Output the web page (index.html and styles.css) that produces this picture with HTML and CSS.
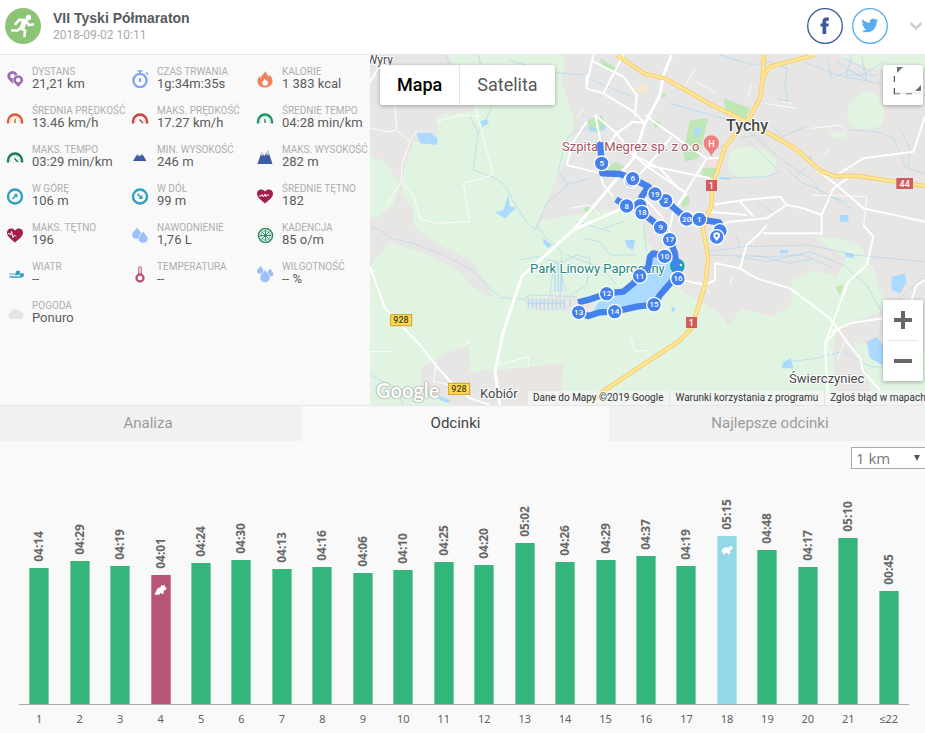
FILE: index.html
```html
<!DOCTYPE html>
<html lang="pl">

<head>
    <meta charset="UTF-8">
    <meta name="viewport" content="width=device-width, initial-scale=1.0">
    <title>VII Tyski Półmaraton</title>
    <link rel="stylesheet" href="styles.css">
</head>

<body>

    <header class="header">
        <svg class="avatar" viewBox="0 0 36 36">
            <circle cx="18" cy="18" r="18" fill="#8bc474"/>
            <circle cx="23.500" cy="9.500" r="2.700" fill="#fff"/>
            <path d="M20.500 12l-6-.3-4 4.300M20 12.500l-4.500 7.500 4.500 2.500-.5 5.500M15.500 20l-3 2.500H7M21.500 13l2 4 4.500-.5" fill="none" stroke="#fff" stroke-width="2.600" stroke-linecap="round" stroke-linejoin="round"/>
            <path d="M17 12l5 1-2.500 7.500-4.500-1z" fill="#fff"/>
        </svg>
        <div class="heading">
            <h1>VII Tyski Półmaraton</h1>
            <time datetime="2018-09-02T10:11">2018-09-02 10:11</time>
        </div>
        <a class="share" href="#" aria-label="Facebook">
            <svg viewBox="0 0 36 36">
                <circle cx="18" cy="18" r="17.300" fill="none" stroke="#3b5998" stroke-width="1.300"/>
                <path d="M15.500 26v-7.500h-2v-3h2v-2c0-2.700 1.300-4 3.800-4h2.500v3.200h-1.500c-.9 0-1.100.4-1.100 1v1.800h2.600l-.4 3h-2.200V26z" fill="#3b5998"/>
            </svg>
        </a>
        <a class="share" href="#" aria-label="Twitter">
            <svg viewBox="0 0 36 36">
                <circle cx="18" cy="18" r="17.300" fill="none" stroke="#55acee" stroke-width="1.300"/>
                <path transform="translate(9.500 9) scale(.7)" d="M23.950 4.570a10 10 0 0 1-2.820.77 4.960 4.960 0 0 0 2.160-2.720c-.95.55-2 .95-3.130 1.180a4.920 4.920 0 0 0-8.380 4.480C7.690 8.100 4.070 6.130 1.640 3.160a4.920 4.920 0 0 0 1.520 6.570 4.900 4.900 0 0 1-2.230-.61v.06c0 2.390 1.710 4.380 3.950 4.830a5 5 0 0 1-2.210.08 4.940 4.940 0 0 0 4.600 3.420A9.870 9.870 0 0 1 0 19.540a13.990 13.990 0 0 0 7.550 2.210c9.060 0 14.010-7.500 14.010-13.980l-.02-.64a9.940 9.940 0 0 0 2.410-2.560z" fill="#55acee"/>
            </svg>
        </a>
        <button class="more" type="button" aria-label="Więcej">
            <svg viewBox="0 0 14 10"><path d="M1.500 2L7 7.500 12.500 2" fill="none" stroke="#ccc" stroke-width="2.500"/></svg>
        </button>
    </header>

    <main>
        <section class="overview">
            <dl class="stats">
                <div class="stat">
                    <svg viewBox="0 0 18 18">
                        <path d="M6.500 1A5.200 5.200 0 0 0 1.300 6.200c0 3 3.200 4.300 5.200 7.300 2-3 5.200-4.300 5.200-7.300A5.200 5.200 0 0 0 6.500 1z" fill="#9c6bb0"/>
                        <circle cx="6.500" cy="6" r="2.300" fill="#f9f9f9"/>
                        <path d="M12.200 5a5.200 5.200 0 0 0-5.200 5.200c0 3 3.200 4 5.200 7.300 2-3.300 5.200-4.300 5.200-7.300A5.200 5.200 0 0 0 12.200 5z" fill="#9c6bb0" stroke="#f9f9f9" stroke-width=".7"/>
                        <circle cx="12.200" cy="10" r="2.300" fill="#f9f9f9"/>
                    </svg>
                    <div><dt>DYSTANS</dt><dd>21,21 km</dd></div>
                </div>
                <div class="stat">
                    <svg viewBox="0 0 18 18" fill="none" stroke="#7fa9ee">
                        <circle cx="9" cy="10.500" r="6.600" stroke-width="2.400"/>
                        <path d="M9 1.500V4M6.500 1h5M15 2.500l2 2" stroke-width="1.700"/>
                        <path d="M9 8v4" stroke-width="2"/>
                    </svg>
                    <div><dt>CZAS TRWANIA</dt><dd>1g:34m:35s</dd></div>
                </div>
                <div class="stat">
                    <svg viewBox="0 0 18 18">
                        <path d="M9.500 1c.5 3 2.500 3.500 3 6 .8-.5 1-1.500.8-2.500 2 2 3.200 4 3.200 6.500 0 4-3.300 6.500-7.500 6.500S1.500 15 1.500 11.200c0-2.500 1.300-4 2.300-5.500 0 1.200.3 2 1.200 2.500C5.500 4.500 8.500 4 9.500 1z" fill="#ef825f"/>
                        <circle cx="9.200" cy="13" r="2.800" fill="#f9f9f9"/>
                        <path d="M8.500 8.500l3 4H7z" fill="#f9f9f9"/>
                    </svg>
                    <div><dt>KALORIE</dt><dd>1 383 kcal</dd></div>
                </div>

                <div class="stat">
                    <svg viewBox="0 0 18 18" fill="none" stroke="#dc5c3b">
                        <path d="M2 14.500v-2a7 7 0 0 1 14 0v2" stroke-width="2.400"/>
                        <path d="M4.500 13.500v-1a4.500 4.500 0 0 1 9 0v1" stroke-dasharray="1 1.200" stroke="#eda390"/>
                        <path d="M9 10v4" stroke-width="1.500"/>
                    </svg>
                    <div><dt>ŚREDNIA PRĘDKOŚĆ</dt><dd>13.46 km/h</dd></div>
                </div>
                <div class="stat">
                    <svg viewBox="0 0 18 18" fill="none" stroke="#c94236">
                        <path d="M2 14.500v-2a7 7 0 0 1 14 0v2" stroke-width="2.400"/>
                        <path d="M4.500 13.500v-1a4.500 4.500 0 0 1 9 0v1" stroke-dasharray="1 1.200" stroke="#dfa29c"/>
                        <path d="M8.500 10.500l3.500 3.500" stroke-width="1.500"/>
                    </svg>
                    <div><dt>MAKS. PRĘDKOŚĆ</dt><dd>17.27 km/h</dd></div>
                </div>
                <div class="stat">
                    <svg viewBox="0 0 18 18" fill="none" stroke="#209463">
                        <path d="M2 14.500v-2a7 7 0 0 1 14 0v2" stroke-width="2.400"/>
                        <path d="M4.500 13.500v-1a4.500 4.500 0 0 1 9 0v1" stroke-dasharray="1 1.200" stroke="#8fc9ae"/>
                        <path d="M9 10v4" stroke-width="1.500"/>
                    </svg>
                    <div><dt>ŚREDNIE TEMPO</dt><dd>04:28 min/km</dd></div>
                </div>

                <div class="stat">
                    <svg viewBox="0 0 18 18" fill="none" stroke="#1d7a5c">
                        <path d="M2 14.500v-2a7 7 0 0 1 14 0v2" stroke-width="2.400"/>
                        <path d="M4.500 13.500v-1a4.500 4.500 0 0 1 9 0v1" stroke-dasharray="1 1.200" stroke="#8dbcad"/>
                        <path d="M8.500 10.500l3.500 3.500" stroke-width="1.500"/>
                    </svg>
                    <div><dt>MAKS. TEMPO</dt><dd>03:29 min/km</dd></div>
                </div>
                <div class="stat">
                    <svg viewBox="0 0 18 18">
                        <path d="M2 13l4.500-7.500 2 3 2.500-3L15.500 13z" fill="#3f5ba5"/>
                        <path d="M5.200 7.700l1.300-2.400L8 7.700l-1.500-.5zM9.500 7.500L11 5.300l1.300 2.200-1.300-.5z" fill="#dfe5f3"/>
                    </svg>
                    <div><dt>MIN. WYSOKOŚĆ</dt><dd>246 m</dd></div>
                </div>
                <div class="stat">
                    <svg viewBox="0 0 18 18">
                        <path d="M1.500 16L5.500 4l3 4 3.500-5.500L16.500 16z" fill="#3f5ba5"/>
                        <path d="M4.500 7l1.200-3.500L7.500 7l-1.300 1zM10 6l2-4 1.500 4-2 1.500z" fill="#c4cde5"/>
                    </svg>
                    <div><dt>MAKS. WYSOKOŚĆ</dt><dd>282 m</dd></div>
                </div>

                <div class="stat">
                    <svg viewBox="0 0 18 18" fill="none" stroke="#2fa0be">
                        <circle cx="9" cy="9.500" r="7" stroke-width="2.400"/>
                        <path d="M6.500 12l4-4" stroke-width="1.700"/>
                        <path d="M7.500 7h4v4z" fill="#2fa0be" stroke="none"/>
                    </svg>
                    <div><dt>W GÓRĘ</dt><dd>106 m</dd></div>
                </div>
                <div class="stat">
                    <svg viewBox="0 0 18 18" fill="none" stroke="#2fa0be">
                        <circle cx="9" cy="9.500" r="7" stroke-width="2.400"/>
                        <path d="M6.500 7l4 4" stroke-width="1.700"/>
                        <path d="M11.500 8v4h-4z" fill="#2fa0be" stroke="none"/>
                    </svg>
                    <div><dt>W DÓŁ</dt><dd>99 m</dd></div>
                </div>
                <div class="stat">
                    <svg viewBox="0 0 18 18">
                        <path d="M9 16.500C5 13 1 10.500 1 6.500 1 2.300 6.500.8 9 4.500 11.500.8 17 2.300 17 6.500c0 4-4 6.500-8 10z" fill="#a31f4b"/>
                        <path d="M3 9h2l1-1.500L7.500 10 9 7l1 2.500L11 8h2" fill="none" stroke="#fff" stroke-width="1"/>
                    </svg>
                    <div><dt>ŚREDNIE TĘTNO</dt><dd>182</dd></div>
                </div>

                <div class="stat">
                    <svg viewBox="0 0 18 18">
                        <path d="M9 16.500C5 13 1 10.500 1 6.500 1 2.300 6.500.8 9 4.500 11.500.8 17 2.300 17 6.500c0 4-4 6.500-8 10z" fill="#a31f4b"/>
                        <path d="M2 7.500l3 1 .5-3 1.500 6 1.500-2.500L10 10.500" fill="none" stroke="#fff" stroke-width="1"/>
                    </svg>
                    <div><dt>MAKS. TĘTNO</dt><dd>196</dd></div>
                </div>
                <div class="stat">
                    <svg viewBox="0 0 18 18" fill="#9dbff8">
                        <path d="M6 1.500c2 3 4.500 4.500 4.500 7.500 0 2.500-2 4-4.500 4s-4.800-1.500-4.800-4c0-3 3-4.500 4.800-7.500z"/>
                        <path d="M12 5c2 3 5 5 5 8 0 2.500-2 4.200-4.800 4.200S7.300 15.500 7.300 13c0-3 2.900-5 4.700-8z" stroke="#f9f9f9" stroke-width=".7"/>
                    </svg>
                    <div><dt>NAWODNIENIE</dt><dd>1,76 L</dd></div>
                </div>
                <div class="stat">
                    <svg viewBox="0 0 18 18" fill="none" stroke="#2c9162">
                        <circle cx="9.500" cy="9.500" r="7" stroke-width="1.600"/>
                        <circle cx="9.500" cy="9.500" r="4.700" stroke-width=".7"/>
                        <path d="M9.500 4v11M4 9.500h11M5.500 5.500l8 8M13.500 5.500l-8 8"/>
                    </svg>
                    <div><dt>KADENCJA</dt><dd>85 o/m</dd></div>
                </div>

                <div class="stat">
                    <svg viewBox="0 0 18 18">
                        <path d="M3 9h7M3 11.500h13" stroke="#8ccbdc" stroke-width="1.300"/>
                        <circle cx="12" cy="7.700" r="2.300" fill="#2fa0be"/>
                        <circle cx="16" cy="10" r="2" fill="#2fa0be"/>
                        <path d="M9 9.500h4M4 12.200h12" stroke="#2fa0be"/>
                    </svg>
                    <div><dt>WIATR</dt><dd>--</dd></div>
                </div>
                <div class="stat">
                    <svg viewBox="0 0 18 18">
                        <path d="M7.500 10V3a1.500 1.500 0 0 1 3 0v7" fill="#e5cbd4" stroke="#c37e93" stroke-width="1"/>
                        <circle cx="9" cy="13" r="3.500" fill="#f9f9f9" stroke="#b8557a" stroke-width="2.300"/>
                    </svg>
                    <div><dt>TEMPERATURA</dt><dd>--</dd></div>
                </div>
                <div class="stat">
                    <svg viewBox="0 0 18 18" fill="#9dbff8">
                        <path d="M4.500 1c1 2 3 3 3 5A3 3 0 0 1 4.500 9 3.200 3.200 0 0 1 1 6c0-2 2.500-3 3.500-5zM14 3.500c1 2 3.300 3 3.300 5a3 3 0 0 1-3.300 3 3 3 0 0 1-3-3c0-2 2-3 3-5z"/>
                        <path d="M9 4.500c1.500 3 5 5 5 8.300C14 15.500 12 17.500 9 17.500s-5-2-5-4.700c0-3.300 3.500-5.300 5-8.300z" stroke="#f9f9f9" stroke-width=".6"/>
                    </svg>
                    <div><dt>WILGOTNOŚĆ</dt><dd>-- %</dd></div>
                </div>

                <div class="stat">
                    <svg viewBox="0 0 18 18">
                        <path d="M4.500 15a3.500 3.500 0 0 1 0-6.500 4.500 4.500 0 0 1 8-1.500c3-.2 5 1.700 5 4 0 2.500-1.500 4-4 4z" fill="#e3e3e3"/>
                    </svg>
                    <div><dt>POGODA</dt><dd>Ponuro</dd></div>
                </div>
            </dl>

            <div class="map">
                <svg class="map-canvas" viewBox="0 0 1665 1050" preserveAspectRatio="xMidYMid slice">
                    <rect width="1665" height="1050" fill="#e8e6e4"/>

                    <!-- forests -->
                    <g fill="#e1f3e1">
                        <path d="M200 180L270 175 320 165 300 70 230 0H585L575 80 612 190 600 290 560 370 530 440 505 500 600 480 710 465 810 480 835 560 860 600 900 690 985 735 1055 780 1075 815 1115 760 1205 785 1265 750 1265 675 1335 645 1400 665 1430 610 1350 560 1330 545 1400 550 1470 570 1510 640 1535 720 1560 760 1450 800 1400 830 1390 880 1400 1050H640L575 1010 580 925 520 935 450 940 300 950 295 875 240 890 155 935 150 1000 250 1050H0V640L20 610 60 560 170 600 260 640 310 700 375 730 310 620 190 560 130 510 130 465 95 420 100 350 130 260 200 250z"/>
                        <path d="M0 300L50 325 90 390 70 450 20 490 0 490z"/>
                        <path d="M860 125L1000 140 1120 190 1090 210 950 190z"/>
                        <path d="M1080 290Q1140 260 1200 295 1240 335 1190 365 1120 380 1080 350 1070 320 1080 290z"/>
                        <path d="M1440 145Q1480 90 1520 120 1555 160 1535 210 1480 235 1440 210 1425 180 1440 145z"/>
                        <path d="M1400 0H1665V50L1500 40z"/>
                        <path d="M1450 860L1600 900 1665 890V1050H1510L1490 960z"/>
                        <path d="M1380 230L1430 230 1430 255 1385 250z"/>
                    </g>

                    <!-- built-up areas -->
                    <path d="M590 20L700 0H1130L1090 180 1060 270 1020 440 990 520 890 560 830 480 700 450 540 480 610 280 640 120z" fill="#e6e6e7"/>
                    <path d="M455 735L600 720 680 740 660 770 500 765zM390 945L575 925 570 1050H380z" fill="#e8e5e3"/>

                    <!-- parks -->
                    <g fill="#bfe6b5">
                        <path d="M960 195L1015 190 985 310 945 320 940 290zM1060 130L1140 160 1125 195 1070 175zM690 10L740 40 735 60 695 30zM655 195L695 180 710 215 685 235 655 225zM1000 340L1040 335 1030 370 995 360zM735 320L765 335 730 355 700 350zM930 440L955 420 960 445 940 460zM845 190L875 205 855 220zM870 110L890 120 875 130zM1395 695L1420 690 1410 720zM640 460L660 455 655 485z"/>
                    </g>
                    <path d="M1010 310H1050V338H1010z" fill="#f6dfe0"/>
                    <path d="M790 100L820 90 835 105 815 115z" fill="#fae8c8"/>

                    <!-- water -->
                    <g fill="#aadaff">
                        <path d="M665 775L685 742 760 718 815 665 850 600 905 595 925 650 900 700 850 750 740 770z"/>
                        <path d="M140 235L180 233 203 250 200 270 150 265z"/>
                        <path d="M330 200L350 192 357 205 340 215zM655 215L665 212 678 225 665 233zM695 210L705 212 705 228 692 222zM975 220L995 215 985 245 975 250z"/>
                        <path d="M415 420L420 455 438 458 405 490 375 472 400 465z"/>
                        <path d="M1230 585H1255V595H1230zM1425 592L1453 598 1450 610 1427 605z"/>
                        <path d="M1565 665L1605 655 1610 680 1590 715 1565 705z"/>
                        <path d="M1490 860L1520 845 1545 880 1538 930 1500 910z"/>
                        <path d="M1240 920L1262 910 1270 940 1235 940z"/>
                        <path d="M520 550L545 570 535 580 520 565zM765 555L795 555 790 585 770 575zM905 755L915 760 912 772 905 768z"/>
                        <path d="M1410 480H1435V500H1410zM1320 300L1325 320 1312 318zM200 1020L240 1035 235 1045 210 1035zM1050 365L1080 370V374L1050 371z"/>
                    </g>
                    <g fill="none" stroke="#acd4ef" stroke-width="2">
                        <path d="M0 515Q30 520 55 548L130 565 220 600 300 640 350 690 390 728 460 732 480 720 620 725"/>
                        <path d="M325 0L365 155 350 190 325 230 310 345 380 370 410 400 430 440 470 500 495 525 530 445 595 390 565 350 585 260 610 230 650 222"/>
                        <path d="M225 0L240 30M420 15L530 50 640 60 700 90 790 125M300 185L325 235"/>
                        <path d="M900 145L1110 205 1170 260 1250 325 1320 370 1360 420 1430 440"/>
                        <path d="M1135 260L1230 350 1190 365 1040 370M1110 250L1160 240 1190 270M1250 340L1290 380 1350 405 1445 460M1310 335L1275 370M1040 285L1060 270M1210 215L1235 245 1310 215"/>
                        <path d="M1050 0L1150 30 1200 20 1250 40 1245 100 1255 140 1220 130M1300 20L1400 60 1500 80 1560 90M1375 20L1385 70 1440 45 1490 75 1475 5M1400 20L1470 65 1540 20M1445 0L1430 60 1520 60"/>
                        <path d="M1440 225L1520 230 1570 250 1610 340 1665 355M1590 220L1620 280 1615 340"/>
                        <path d="M1015 590L1120 575 1320 570 1450 600 1665 620M1015 600L1200 605 1300 600 1390 640M1100 540L1110 575M1150 600L1260 625 1330 610"/>
                        <path d="M1100 605L1190 620 1320 590 1420 630 1490 690 1540 780M1665 660L1600 720 1560 770"/>
                        <path d="M1260 920L1340 910 1420 890 1500 935 1665 940"/>
                        <path d="M585 390L660 370M620 500L720 530M570 625L620 600 660 610 650 690 600 720M450 615L500 605 560 620 590 710M550 640L540 720M590 600L700 640 740 690M500 510L530 550 575 590 570 725M640 550L690 560 720 600 800 600M700 520L760 500M820 510L830 590M0 960L80 1000 100 1050"/>
                        <path d="M1425 10L1490 45M1160 440L1220 480"/>
                    </g>
                    <!-- fish ponds -->
                    <path d="M475 730v30M487 730v32M499 732v32M511 732v34M523 732v34M535 732v32M547 732v32M559 732v32M571 732v30M583 732v30M600 735v20M472 745h110M555 620v90M565 620v90M575 620v90" fill="none" stroke="#b2dbf6" stroke-width="4"/>

                    <!-- minor roads -->
                    <g fill="none" stroke="#fdfdfc" stroke-width="3">
                        <path d="M0 220L50 230 80 225 120 260 95 330 95 380 50 450M95 380L130 420 150 490 200 505 300 500 280 385 370 360 330 210 315 150M120 258L140 225M80 225L75 150M200 200L270 180 325 185M385 930L475 905V935M200 920L190 980 240 990M280 870L300 862M780 840L795 890 840 885"/>
                        <path d="M1235 140L1265 145M1185 145L1280 160M1325 220L1410 210 1430 230M975 40L945 95M980 80L1040 115M1145 85L1135 125M1360 300L1380 285M600 460L660 450 690 480M640 160L620 190"/>
                        <path d="M1325 420L1490 425 1480 520M0 890H60M1400 920L1420 870 1430 850M1005 690L1020 720M1085 665L1080 690M1385 900L1365 860"/>
                    </g>

                    <!-- white main roads -->
                    <g fill="none" stroke="#fff" stroke-width="6" stroke-linejoin="round">
                        <path d="M0 80L25 40 40 20M0 635L45 760 150 870 205 940 250 990 300 1030 360 1050"/>
                        <path d="M825 430L610 525 455 665 400 830 375 950 390 1050" stroke-width="9"/>
                        <path d="M905 0L880 60 870 120 825 205 790 310 700 420 610 525" stroke-width="9"/>
                        <path d="M650 90L670 0M670 20L760 65 800 120M650 60L650 100 700 115 790 170 825 205M700 115L760 0M800 120L795 185M590 330L610 260 650 200M590 330L690 355 700 390 730 425M675 180L740 235 790 300 870 340 930 405M675 180L690 250 695 330M695 300L740 235 790 200 825 205M825 180L880 220 950 270 1010 310 1060 310M905 245L860 300 790 380M790 300L825 330 950 415M830 330L1020 370M910 470L1010 310M890 560L910 470 950 415M825 430L880 490"/>
                        <path d="M1025 450L1120 435 1230 425 1250 450 1190 490 1080 500 1050 510M1110 440L1150 485M1250 450L1300 460 1355 480 1355 540M1355 480L1390 400 1440 365M1015 470L1130 480"/>
                        <path d="M1395 363L1480 310 1630 290 1665 185M1340 345L1400 390 1480 460 1665 500"/>
                        <path d="M1190 510L1170 535 1130 570 1110 640 1160 670 1260 700 1380 790 1430 860 1470 910 1480 950 1530 1005M1180 535H1355M1480 510L1510 545 1490 630 1435 680 1365 865 1375 1050M1110 640L1035 625 1035 675 1005 690M935 675L1005 690M1385 830L1440 805 1540 790M1540 790L1620 750 1640 690 1665 675M1365 865L1400 825"/>
                    </g>

                    <!-- highways, drawn as a casing with a lighter core -->
                    <g fill="none" stroke-linejoin="round">
                        <g stroke="#f3cd6b" stroke-width="13">
                            <path id="hw1" d="M1182 0L1177 80 1170 130 1140 185 1065 275 1045 340 1027 390 1025 450 998 515 1015 610 1005 690 965 820 925 860 825 925 690 1015 650 1050"/>
                            <path id="hw44" d="M740 0L825 57 885 70 1025 150 1125 198 1205 240 1275 280 1355 350 1395 363 1465 363 1575 380 1665 393"/>
                            <path id="hwn" d="M1177 70L1200 35 1335 0"/>
                        </g>
                        <g stroke="#ffe594" stroke-width="8">
                            <use href="#hw1"/>
                            <use href="#hw44"/>
                            <use href="#hwn"/>
                        </g>
                    </g>

                    <!-- places -->
                    <g class="place">
                        <text x="-10" y="27" font-size="36">Wyry</text>
                        <text class="city" x="1068" y="228" font-size="48">Tychy</text>
                        <text x="330" y="1029" font-size="39">Kobiór</text>
                        <text x="1257" y="984" font-size="39">Świerczyniec</text>
                        <text class="hospital" x="576" y="289" font-size="39">Szpital Megrez sp. z o.o</text>
                        <text class="park" x="480" y="655" font-size="39">Park Linowy Paprocany</text>
                    </g>
                    <path d="M1024 305c-4-18-23-22-23-41a23 23 0 0 1 46 0c0 19-19 23-23 41z" fill="#f07f80"/>
                    <text class="shield-text" x="1024" y="275" font-size="27">H</text>
                    <circle cx="922" cy="633" r="22" fill="#12a5b4"/>
                    <path d="M910 632h6M928 630h8M932 626v8" stroke="#d8f2f4" stroke-width="4"/>

                    <!-- road shields -->
                    <g class="shields">
                        <path d="M1008 375h33v33h-33zM948 786h33v33h-33zM1579 369h50v33h-50z" fill="#d05c5c"/>
                        <g fill="#ffd94f" stroke="#c9a227" stroke-width="3">
                            <rect x="62" y="779" width="63" height="33"/>
                            <rect x="236" y="985" width="63" height="33"/>
                        </g>
                        <text class="shield-text" x="1024" y="401" font-size="27">1</text>
                        <text class="shield-text" x="964" y="812" font-size="27">1</text>
                        <text class="shield-text" x="1604" y="395" font-size="27">44</text>
                        <text class="shield-text dark" x="93" y="805" font-size="27">928</text>
                        <text class="shield-text dark" x="267" y="1011" font-size="27">928</text>
                    </g>

                    <!-- route -->
                    <g fill="none" stroke="#4481ec" stroke-width="19" stroke-linejoin="round">
                        <path d="M690 262L695 325 697 355 750 357 788 371 835 395 855 417 887 437 950 492 988 493 1047 502 1055 520 1040 546"/>
                        <path d="M835 395L815 425 810 450M738 433L770 453 810 450 816 473 872 517 899 554 915 595 924 671 905 680 870 720 852 749 800 755 734 770 690 772 655 783 626 772M624 742L660 733 710 716 760 710 790 685 809 663 835 635 840 605 850 595 884 604"/>
                    </g>
                    <g class="marker">
                        <g fill="#4481ec" stroke="#fff" stroke-width="4">
                            <circle cx="695" cy="325" r="22"/>
                            <circle cx="784" cy="375" r="22"/>
                            <circle cx="788" cy="371" r="22"/>
                            <circle cx="810" cy="452" r="22"/>
                            <circle cx="770" cy="453" r="22"/>
                            <circle cx="816" cy="473" r="22"/>
                            <circle cx="887" cy="437" r="22"/>
                            <circle cx="855" cy="417" r="22"/>
                            <circle cx="950" cy="492" r="22"/>
                            <circle cx="988" cy="493" r="22"/>
                            <circle cx="872" cy="517" r="22"/>
                            <circle cx="899" cy="554" r="22"/>
                            <circle cx="884" cy="604" r="22"/>
                            <circle cx="924" cy="671" r="22"/>
                            <circle cx="852" cy="749" r="22"/>
                            <circle cx="734" cy="770" r="22"/>
                            <circle cx="626" cy="772" r="22"/>
                            <circle cx="710" cy="716" r="22"/>
                            <circle cx="809" cy="663" r="22"/>
                            <circle cx="1050" cy="528" r="22"/>
                            <circle cx="1040" cy="546" r="22"/>
                        </g>
                        <text x="695" y="333">5</text>
                        <text x="788" y="379">6</text>
                        <text x="770" y="461">8</text>
                        <text x="816" y="481">18</text>
                        <text x="855" y="425">19</text>
                        <text x="887" y="445">2</text>
                        <text x="950" y="500">20</text>
                        <text x="988" y="501">1</text>
                        <text x="872" y="525">9</text>
                        <text x="899" y="562">17</text>
                        <text x="884" y="612">10</text>
                        <text x="924" y="679">16</text>
                        <text x="852" y="757">15</text>
                        <text x="734" y="778">14</text>
                        <text x="626" y="780">13</text>
                        <text x="710" y="724">12</text>
                        <text x="809" y="671">11</text>
                        <path d="M1040 559c-2-7-10-10-10-17a10 10 0 0 1 20 0c0 7-8 10-10 17z" fill="#fff"/>
                        <circle cx="1040" cy="542" r="4" fill="#4481ec"/>
                    </g>
                </svg>

                <div class="map-type">
                    <button class="active" type="button">Mapa</button>
                    <button type="button">Satelita</button>
                </div>
                <button class="fullscreen" type="button" aria-label="Pełny ekran">
                    <svg viewBox="0 0 40 40">
                        <path d="M11.500 11v6M11.500 23v5.500H17M23 28.500h6" fill="none" stroke="#555" stroke-width="1.500"/>
                        <path d="M12 1H40V28H12z" fill="#fff"/>
                        <path d="M12 28H39" stroke="#ddd"/>
                        <path d="M14 2h6l-6 6zM38 20v6h-6z" fill="#6b727b"/>
                    </svg>
                </button>
                <div class="zoom">
                    <button type="button" aria-label="Powiększ">
                        <svg viewBox="0 0 18 18"><path d="M9 0v18M0 9h18" stroke="#666" stroke-width="4"/></svg>
                    </button>
                    <button type="button" aria-label="Pomniejsz">
                        <svg viewBox="0 0 18 18"><path d="M0 9h18" stroke="#666" stroke-width="4"/></svg>
                    </button>
                </div>
                <span class="logo">Google</span>
                <div class="map-legal">
                    <span>Dane do Mapy ©2019 Google</span>
                    <a href="#">Warunki korzystania z programu</a>
                    <a href="#">Zgłoś błąd w mapach</a>
                </div>
            </div>
        </section>

        <nav class="tabs">
            <button type="button">Analiza</button>
            <button class="active" type="button">Odcinki</button>
            <button type="button">Najlepsze odcinki</button>
        </nav>

        <section class="laps">
            <div class="distance">
                <select aria-label="Długość odcinka">
                    <option>1 km</option>
                    <option>5 km</option>
                </select>
            </div>

            <ol class="chart">
                <li><div class="column"><span class="pace">04:14</span><div class="bar" style="height: 136px"></div></div><span class="km">1</span></li>
                <li><div class="column"><span class="pace">04:29</span><div class="bar" style="height: 143px"></div></div><span class="km">2</span></li>
                <li><div class="column"><span class="pace">04:19</span><div class="bar" style="height: 138px"></div></div><span class="km">3</span></li>
                <li>
                    <div class="column">
                        <span class="pace">04:01</span>
                        <div class="bar fastest" style="height: 129px">
                            <svg viewBox="0 0 14 12"><path d="M1 11.500c-.8-1 0-2 1-2.500 0-3 2-5 5-5.500L8 1l2 1 1-1.500 1 2.500c1 .5 1.500 1.500 1.500 2.500-.5 1-1.500 1.500-2.500 1.500l-1 2 1 1.500H8L7 9.500 5.500 11.500z" fill="#fff"/></svg>
                        </div>
                    </div>
                    <span class="km">4</span>
                </li>
                <li><div class="column"><span class="pace">04:24</span><div class="bar" style="height: 141px"></div></div><span class="km">5</span></li>
                <li><div class="column"><span class="pace">04:30</span><div class="bar" style="height: 144px"></div></div><span class="km">6</span></li>
                <li><div class="column"><span class="pace">04:13</span><div class="bar" style="height: 135px"></div></div><span class="km">7</span></li>
                <li><div class="column"><span class="pace">04:16</span><div class="bar" style="height: 137px"></div></div><span class="km">8</span></li>
                <li><div class="column"><span class="pace">04:06</span><div class="bar" style="height: 131px"></div></div><span class="km">9</span></li>
                <li><div class="column"><span class="pace">04:10</span><div class="bar" style="height: 134px"></div></div><span class="km">10</span></li>
                <li><div class="column"><span class="pace">04:25</span><div class="bar" style="height: 142px"></div></div><span class="km">11</span></li>
                <li><div class="column"><span class="pace">04:20</span><div class="bar" style="height: 139px"></div></div><span class="km">12</span></li>
                <li><div class="column"><span class="pace">05:02</span><div class="bar" style="height: 161px"></div></div><span class="km">13</span></li>
                <li><div class="column"><span class="pace">04:26</span><div class="bar" style="height: 142px"></div></div><span class="km">14</span></li>
                <li><div class="column"><span class="pace">04:29</span><div class="bar" style="height: 144px"></div></div><span class="km">15</span></li>
                <li><div class="column"><span class="pace">04:37</span><div class="bar" style="height: 148px"></div></div><span class="km">16</span></li>
                <li><div class="column"><span class="pace">04:19</span><div class="bar" style="height: 138px"></div></div><span class="km">17</span></li>
                <li>
                    <div class="column">
                        <span class="pace">05:15</span>
                        <div class="bar slowest" style="height: 168px">
                            <svg viewBox="0 0 14 12"><path d="M0 7.500l2-.5c0-3 2-4.500 4.500-4.500 1 0 2 .5 2.500 1C9 2 10.500.8 12 1c1.500.3 2 2 1.300 3.200-.6.9-1.800 1-2.300 1.800V10H8.500V8.500h-3V10H3V8z" fill="#fff"/></svg>
                        </div>
                    </div>
                    <span class="km">18</span>
                </li>
                <li><div class="column"><span class="pace">04:48</span><div class="bar" style="height: 154px"></div></div><span class="km">19</span></li>
                <li><div class="column"><span class="pace">04:17</span><div class="bar" style="height: 137px"></div></div><span class="km">20</span></li>
                <li><div class="column"><span class="pace">05:10</span><div class="bar" style="height: 166px"></div></div><span class="km">21</span></li>
                <li><div class="column"><span class="pace">00:45</span><div class="bar" style="height: 113px"></div></div><span class="km">≤22</span></li>
            </ol>
        </section>
    </main>

</body>

</html>
```
FILE: styles.css
```css
* {
    box-sizing: border-box;
}

body {
    font-family: Roboto, Arial, sans-serif;
    margin: 0;
    background-color: #f9f9f9;
    color: #5b5b5b;
    overflow-x: hidden;
}

button {
    font-family: inherit;
    margin: 0;
    padding: 0;
    border: none;
    background: none;
    cursor: pointer;
}

svg {
    display: block;
}

/* header */
.header {
    display: flex;
    align-items: center;
    height: 55px;
    padding: 0 2px 3px 5px;
    background-color: #fff;
    border-bottom: 1px solid #e6e6e6;
}

.avatar {
    width: 36px;
    height: 36px;
}

.heading {
    flex: 1;
    margin-left: 12px;
}

.heading h1 {
    margin: 0;
    font-family: "Liberation Sans", Arial, sans-serif;
    font-size: 14px;
    line-height: 18px;
    font-weight: bold;
    color: #555b61;
}

.heading time {
    display: block;
    font-size: 12px;
    line-height: 16px;
    color: #aaa;
}

.share {
    width: 36px;
    margin-right: 9px;
}

.more {
    width: 14px;
    margin-left: 12px;
}

/* stats and map */
.overview {
    display: flex;
    height: 350px;
}

.stats {
    width: 370px;
    margin: 0;
    padding-top: 10px;
    display: grid;
    grid-template-columns: 125px 125px 120px;
    grid-auto-rows: 39px;
}

.stat {
    display: flex;
    gap: 8px;
    padding-left: 6px;
    white-space: nowrap;
}

.stat svg {
    flex: none;
    width: 18px;
    height: 18px;
    margin-top: 5px;
}

.stat dt {
    font-size: 10px;
    line-height: 13px;
    color: #aeaeae;
}

.stat dd {
    margin: 0;
    font-size: 13px;
    line-height: 11px;
}

.map {
    position: relative;
    flex: 1;
    min-width: 0;
    overflow: hidden;
}

.map-canvas {
    width: 100%;
    height: 100%;
}

.place text {
    fill: #44484d;
    stroke: #fff;
    stroke-width: 6px;
    stroke-linejoin: round;
    paint-order: stroke;
}

.place .city {
    font-weight: 500;
}

.place .hospital {
    fill: #a85560;
}

.place .park {
    fill: #23867f;
}

.shield-text {
    fill: #fff;
    font-weight: 500;
    text-anchor: middle;
}

.shield-text.dark {
    fill: #45401f;
}

.marker text {
    fill: #fff;
    font-size: 24px;
    font-weight: 500;
    text-anchor: middle;
}

.map-type,
.fullscreen,
.zoom {
    position: absolute;
    background-color: #fff;
    border-radius: 2px;
    box-shadow: 0 1px 4px rgba(0, 0, 0, 0.3);
}

.map-type {
    top: 10px;
    left: 10px;
    display: flex;
    height: 40px;
}

.map-type button {
    padding: 0 17px 2px;
    font-size: 18px;
    color: #565656;
}

.map-type .active {
    font-weight: 500;
    color: #000;
    border-right: 1px solid #e6e6e6;
}

.fullscreen {
    top: 10px;
    right: 2px;
    width: 40px;
    height: 40px;
}

.zoom {
    right: 2px;
    bottom: 24px;
    width: 40px;
    padding: 0 5px;
}

.zoom button {
    display: flex;
    align-items: center;
    justify-content: center;
    width: 100%;
    height: 40px;
}

.zoom button + button {
    height: 41px;
    border-top: 1px solid #e6e6e6;
}

.zoom svg {
    width: 18px;
    height: 18px;
}

.logo {
    position: absolute;
    left: 6px;
    bottom: 3px;
    font-family: Lato, sans-serif;
    font-size: 20px;
    line-height: 24px;
    font-weight: bold;
    color: #fff;
    text-shadow: 0 0 2px #888, 0 0 1px #999;
}

.map-legal {
    position: absolute;
    left: 158px;
    bottom: 0;
    display: flex;
    background-color: rgba(245, 245, 245, 0.75);
    white-space: nowrap;
}

.map-legal span,
.map-legal a {
    padding: 0 6px 0 5px;
    font-size: 10px;
    line-height: 14px;
    color: #333;
    text-decoration: none;
}

.map-legal a {
    border-left: 1px solid #e2e6e0;
}

/* tabs */
.tabs {
    display: grid;
    grid-template-columns: 308fr 307fr 322fr;
    margin: 0 -6px;
    border-top: 1px solid #e6e6e6;
}

.tabs button {
    height: 35px;
    padding-bottom: 2px;
    font-size: 15px;
    color: #9b9b9b;
    background-color: #f1f1f1;
}

.tabs .active {
    color: #444;
    background-color: #f9f9f9;
}

/* laps */
.laps {
    padding-top: 6px;
}

.distance {
    position: relative;
    width: 78px;
    margin-left: auto;
    margin-right: -4px;
}

.distance select {
    display: block;
    width: 100%;
    height: 22px;
    padding: 0 4px 2px;
    appearance: none;
    font-family: "Open Sans", sans-serif;
    font-size: 15px;
    color: #777;
    background-color: #fff;
    border: 1px solid #a9a9a9;
    border-radius: 0;
}

.distance::after {
    content: "";
    position: absolute;
    top: 8px;
    right: 9px;
    border: 3px solid transparent;
    border-top: 6px solid #555;
    border-bottom: none;
    pointer-events: none;
}

.chart {
    list-style: none;
    margin: 0 16px 0 19px;
    padding: 0;
    display: grid;
    grid-template-columns: repeat(22, 1fr);
    font-family: "Noto Sans", sans-serif;
}

.column {
    display: flex;
    flex-direction: column;
    align-items: center;
    justify-content: flex-end;
    height: 236px;
    border-bottom: 1px solid #aaa;
}

.pace {
    writing-mode: vertical-rl;
    transform: rotate(180deg);
    margin-bottom: 6px;
    font-size: 12px;
    line-height: 16px;
    font-weight: bold;
    color: #666;
}

.bar {
    width: 20px;
    padding-top: 9px;
    background-color: #33b57b;
    border: 1px solid #7ccfa9;
    border-width: 0 1px;
}

.bar svg {
    width: 13px;
    margin: 0 auto;
}

.fastest {
    background-color: #b95577;
    border-color: #cd86a0;
}

.slowest {
    background-color: #94d7e7;
    border-color: #b2e2ee;
}

.km {
    display: block;
    margin-top: 6px;
    font-size: 11px;
    line-height: 16px;
    text-align: center;
    color: #606060;
}
```
